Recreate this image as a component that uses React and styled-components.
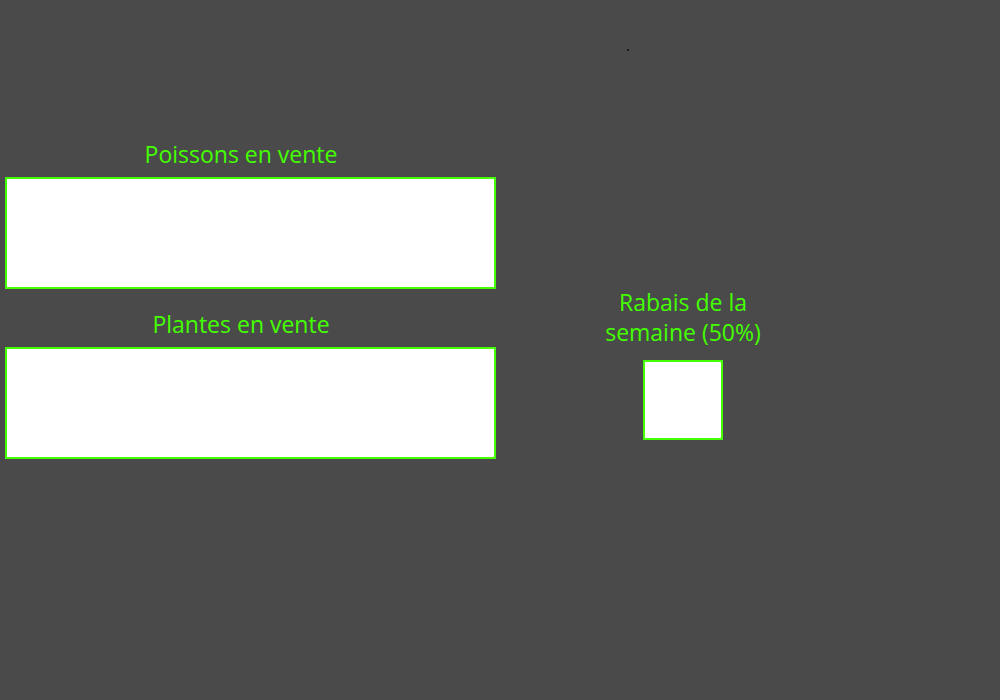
import styled, { createGlobalStyle } from "styled-components";

const Global = createGlobalStyle`
    html, body {
        margin: 0;
        padding: 0;
        background-color: #4a4a4a;
    }
    body {
        font-family: "Open Sans", "Noto Sans", sans-serif;
    }
`;

const Page = styled.div`
    width: 1000px;
    min-height: 700px;
    background-color: #4a4a4a;
`;

const Header = styled.div`
    height: 139px;
    padding: 49px 0 0 627px;
    box-sizing: border-box;
    span {
        display: block;
        width: 2px;
        height: 2px;
        background-color: #1a1a1a;
    }
`;

const Main = styled.div`
    display: flex;
    align-items: flex-start;
    gap: 97px;
    padding-left: 5px;
`;

const Left = styled.div`
    width: 491px;
    display: flex;
    flex-direction: column;
`;

const Section = styled.section`
    display: flex;
    flex-direction: column;
    margin-top: ${(props) => props.top || 0}px;
`;

const Title = styled.h2`
    margin: 0 19px 8px 0;
    font-size: 23px;
    font-weight: 400;
    line-height: 30px;
    color: #44ff00;
    text-align: center;
`;

const Box = styled.div`
    box-sizing: border-box;
    width: ${(props) => props.w}px;
    height: ${(props) => props.h}px;
    background-color: #ffffff;
    border: 2px solid #44ff00;
`;

const Right = styled.div`
    width: 180px;
    margin-top: 148px;
    display: flex;
    flex-direction: column;
    align-items: center;
    h2 {
        margin: 0 0 13px 0;
        padding: 0 6px;
    }
`;

function Sale(props) {
    return (
        <Section top={props.top}>
            <Title>{props.name}</Title>
            <Box w={491} h={112} />
        </Section>
    );
}

export default function App() {
    return (
        <Page>
            <Global />
            <Header>
                <span />
            </Header>
            <Main>
                <Left>
                    <Sale name="Poissons en vente" />
                    <Sale name="Plantes en vente" top={20} />
                </Left>
                <Right>
                    <Title>Rabais de la semaine (50%)</Title>
                    <Box w={80} h={80} />
                </Right>
            </Main>
        </Page>
    );
}
